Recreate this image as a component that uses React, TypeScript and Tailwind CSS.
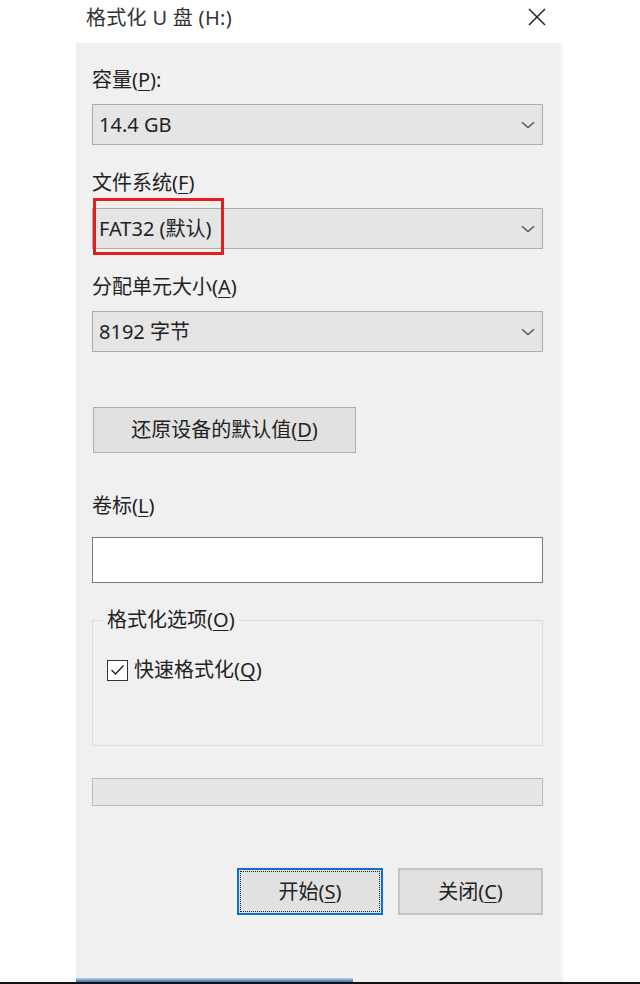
import React from 'react'

const font = "font-['Noto_Sans','Noto_Sans_CJK_SC',sans-serif]"

function Key({ k }: { k: string }) {
  return <span className="underline underline-offset-[3px] decoration-1">{k}</span>
}

function Label({ text, k, colon, className = '' }: { text: string; k: string; colon?: boolean; className?: string }) {
  return (
    <div className={`h-[24px] leading-[24px] text-[20px] text-[#222] ${className}`}>
      {text}(<Key k={k} />){colon ? ':' : ''}
    </div>
  )
}

function Chevron() {
  return (
    <svg width="14" height="8" viewBox="0 0 14 8" fill="none">
      <path d="M1 1.2 L7 6.5 L13 1.2" stroke="#555" strokeWidth="1.4" />
    </svg>
  )
}

function Combo({ value, children }: { value: string; children?: React.ReactNode }) {
  return (
    <div className="relative h-[41px] border border-[#adadad] bg-[#e5e5e5] flex items-center justify-between pl-[6px] pr-[7px] text-[20px] text-[#222]">
      <span>{value}</span>
      <Chevron />
      {children}
    </div>
  )
}

export default function App() {
  return (
    <div className={`h-[984px] w-[640px] overflow-hidden bg-white flex flex-col ${font}`}>
      <div className="ml-[76px] w-[487px] flex flex-col flex-1">
        {/* title bar */}
        <header className="h-[43px] flex items-center justify-between pl-[10px] pr-[17px]">
          <span className="text-[20px] text-[#333] -mt-[8px] tracking-[0.3px]">格式化 U 盘 (H:)</span>
          <svg width="18" height="18" viewBox="0 0 18 18" className="-mt-[10px]">
            <path d="M1 1 L17 17 M17 1 L1 17" stroke="#222" strokeWidth="1.5" />
          </svg>
        </header>

        <main className="flex-1 bg-[#f0f0f0] border-r-[3px] border-[#f5f5f5] pl-[16px] pr-[17px] pt-[25px] flex flex-col">
          <Label text="容量" k="P" colon className="mb-[12px]" />
          <Combo value="14.4 GB" />

          <Label text="文件系统" k="F" className="mt-[26px] mb-[13px]" />
          <Combo value="FAT32 (默认)">
            <div className="absolute left-0 -top-[11px] w-[131px] h-[57px] border-[3px] border-[#e0201f]" />
          </Combo>

          <Label text="分配单元大小" k="A" className="mt-[26px] mb-[12px]" />
          <Combo value="8192 字节" />

          <button className="mt-[55px] ml-[1px] w-[263px] h-[46px] border border-[#adadad] bg-[#e1e1e1] text-[20px] text-[#222]">
            还原设备的默认值(<Key k="D" />)
          </button>

          <Label text="卷标" k="L" className="mt-[41px] mb-[19px]" />
          <div className="h-[46px] border border-[#7a7a7a] bg-white" />

          <fieldset className="mt-[25px] h-[138px] border border-[#dcdcdc] pl-[10px] pt-[26px]">
            <legend className="px-[4px] h-[24px] leading-[24px] text-[20px] text-[#222]">
              格式化选项(<Key k="O" />)
            </legend>
            <label className="ml-[4px] flex items-center gap-[6px] h-[24px] text-[20px] text-[#222]">
              <span className="w-[21px] h-[21px] border border-[#333] bg-white flex items-center justify-center">
                <svg width="15" height="12" viewBox="0 0 15 12" fill="none">
                  <path d="M1.5 6 L5.5 10 L13.5 1.5" stroke="#222" strokeWidth="1.4" />
                </svg>
              </span>
              <span>
                快速格式化(<Key k="Q" />)
              </span>
            </label>
          </fieldset>

          <div className="mt-[32px] h-[28px] border border-[#bcbcbc] bg-[#e6e6e6]" />

          <div className="mt-[62px] flex justify-end gap-[15px]">
            <button className="w-[146px] h-[47px] border-2 border-[#0f6fc6] bg-[#e1e1e1] p-[1px] text-[20px] text-[#222]">
              <div className="h-full w-full border border-dotted border-[#222] flex items-center justify-center">
                开始(<Key k="S" />)
              </div>
            </button>
            <button className="w-[145px] h-[47px] border-2 border-[#c4c4c4] bg-[#e1e1e1] text-[20px] text-[#222]">
              关闭(<Key k="C" />)
            </button>
          </div>
        </main>
      </div>

      {/* taskbar edge */}
      <div className="h-[4px] flex">
        <div className="ml-[76px] w-[277px] bg-gradient-to-b from-[#b9d7ef] to-[#3c6c9c]" />
        <div className="w-[210px] bg-[#f0f0f0]" />
      </div>
      <div className="h-[2px] bg-[#111]" />
    </div>
  )
}
